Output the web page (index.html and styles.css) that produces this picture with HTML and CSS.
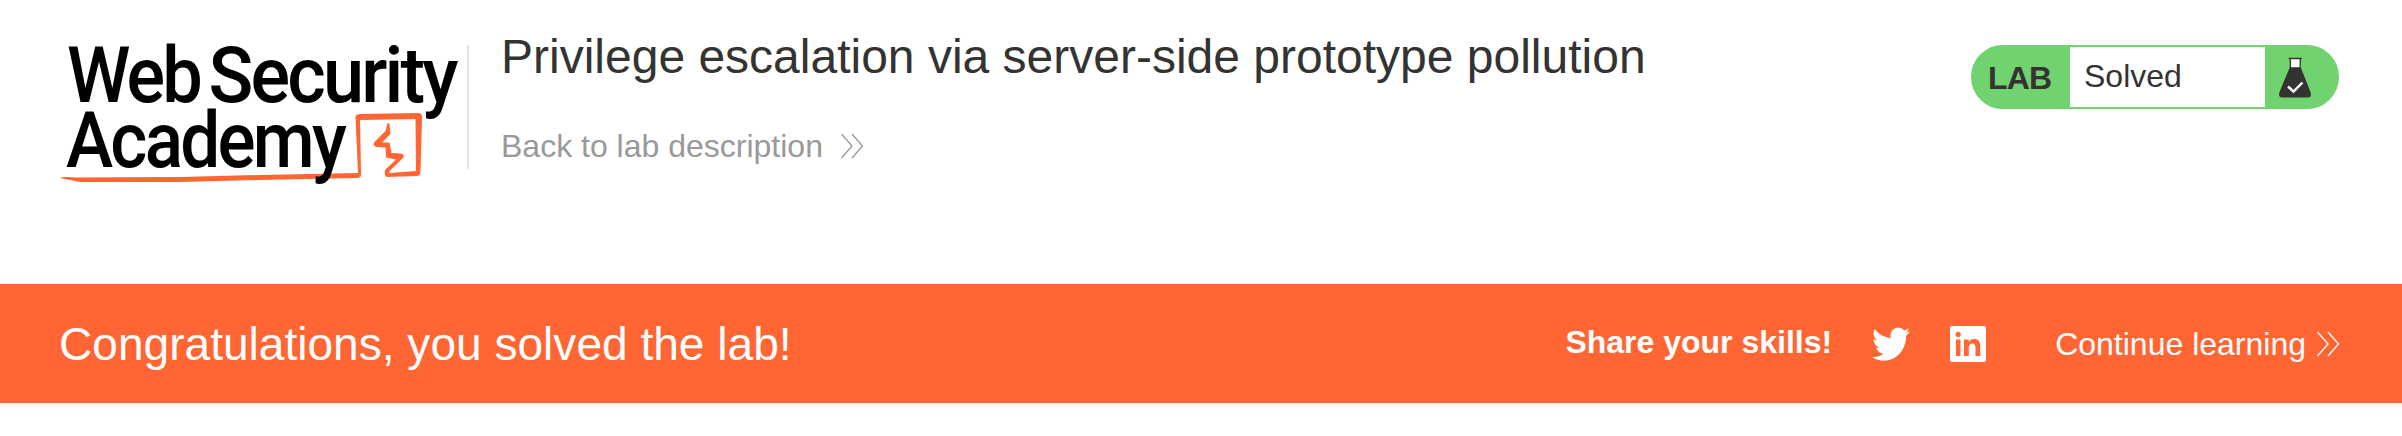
FILE: index.html
```html
<!DOCTYPE html>
<html lang="en">
<head>
<meta charset="utf-8">
<title>Privilege escalation via server-side prototype pollution</title>
<link rel="stylesheet" href="styles.css">
</head>
<body>
<header class="lab-header">
  <a class="logo">
    <svg width="407" height="175" viewBox="60 20 407 175" role="img" aria-label="Web Security Academy">
      <path fill="#ff6633" d="M60 178 Q63 176.500 76 177.500 L180 177 L260 175 L358 173 L355.500 117 Q356 114 360 114 L419 113 Q422.500 114 422 118 L420.500 172 Q420.500 176 417 176 L387 177 Q384 176 385 170 L396 159.500 L386 157.500 L385.500 147.500 L376 147 Q372.500 145.500 374 142.500 L385.500 131 L387.500 123 L389.500 124 L390.500 134 L382 142.500 L389.500 142.500 L391.500 153 L401 153.500 Q405.500 155 403 158 L389.500 171 L389.500 173 L416 171 L415.500 119 L360 120 L361 174 Q361 178 357 178 L260 180 L180 182 L80 182 Z"/>
      <g class="logo-word">
        <text x="67" y="102.300" textLength="133" lengthAdjust="spacingAndGlyphs">Web</text>
        <text x="208.500" y="102.300" textLength="247" lengthAdjust="spacingAndGlyphs">Security</text>
        <text x="66" y="167.200" textLength="278" lengthAdjust="spacingAndGlyphs">Academy</text>
      </g>
    </svg>
  </a>
  <div class="title">
    <h2>Privilege escalation via server-side prototype pollution</h2>
    <a class="back">Back to lab description
      <svg class="chevrons" width="24" height="26" viewBox="0 0 24 26"><path d="M1.500 1 12 13 1.500 25M12 1 22.500 13 12 25"/></svg>
    </a>
  </div>
  <div class="status">
    <span class="status-label">LAB</span>
    <p>Solved</p>
    <span class="status-icon">
      <svg width="34" height="42" viewBox="0 0 34 42">
        <path fill="#333332" d="M11.500 11 1.500 35Q0 40.500 4 40.500H30Q34 40.500 32.500 35L23 11Z"/>
        <path fill="#fff" stroke="#333332" stroke-width="1.300" d="M11.500 1.500h11.500l-.8 1.500v8H12.300V3z"/>
        <path fill="none" stroke="#fff" stroke-width="2.400" d="M10 29.500 15.500 34.500 24.500 25.500"/>
      </svg>
    </span>
  </div>
</header>
<section class="banner">
  <h4>Congratulations, you solved the lab!</h4>
  <span class="share">Share your skills!</span>
  <a class="twitter"><svg width="38" height="34" viewBox="0 1.900 24 20" preserveAspectRatio="none"><path d="M24 4.600a10 10 0 0 1-2.800.8 5 5 0 0 0 2.200-2.700c-1 .5-2 1-3.100 1.200a4.900 4.900 0 0 0-8.400 4.500C7.700 8.100 4.100 6.100 1.700 3.100a4.900 4.900 0 0 0 1.500 6.600c-.8 0-1.600-.2-2.200-.6v.1c0 2.300 1.700 4.300 3.900 4.800-.7.200-1.500.2-2.200.1a4.900 4.900 0 0 0 4.600 3.400A9.900 9.900 0 0 1 0 19.500a14 14 0 0 0 7.500 2.200c9.100 0 14-7.500 14-14v-.6c1-.7 1.800-1.600 2.500-2.500z"/></svg></a>
  <a class="linkedin"><svg width="36" height="36" viewBox="0 0 36 36"><path fill-rule="evenodd" d="M2 0H34Q36 0 36 2V34Q36 36 34 36H2Q0 36 0 34V2Q0 0 2 0ZM6 13.500V30H10.500V13.500ZM8.200 5.800a2.600 2.600 0 1 0 0 5.200 2.600 2.600 0 0 0 0-5.200ZM14 13.500V30H18.800V21.500Q19 17.500 22.200 17.500T25.500 21.500V30H30.300V20.500C30.300 15.500 28.500 13 24.200 13Q20.500 13 18.800 16V13.500Z"/></svg></a>
  <a class="continue">Continue learning
    <svg class="chevrons" width="24" height="26" viewBox="0 0 24 26"><path d="M1.500 1 12 13 1.500 25M12 1 22.500 13 12 25"/></svg>
  </a>
</section>
</body>
</html>
```
FILE: styles.css
```css
body {
  margin: 0;
  background: #fff;
  font-family: "Liberation Sans", Arial, sans-serif;
  font-size: 32px;
  line-height: 36px;
  color: #333332;
}
h2, h4, p { margin: 0; font-weight: 400; }
svg { display: block; flex: none; }
.lab-header {
  display: flex;
  align-items: flex-start;
  box-sizing: border-box;
  height: 284px;
  padding: 45px 63px 0 60px;
}
.logo {
  height: 124px;
  border-right: 2px solid #e5e5e5;
}
.logo svg { margin-top: -25px; }
.logo-word {
  font: 500 77.500px Roboto, sans-serif;
  letter-spacing: -3px;
  fill: #000;
}
.title {
  flex: 1;
  margin: -15px 0 0 32px;
}
.title h2 {
  font-size: 48px;
  line-height: 54px;
  white-space: nowrap;
}
.back {
  display: flex;
  align-items: center;
  gap: 17px;
  margin-top: 44px;
  color: #999;
}
.chevrons {
  fill: none;
  stroke: currentColor;
  stroke-width: 1.300;
}
.status {
  display: flex;
  box-sizing: border-box;
  width: 368px;
  height: 64px;
  border: 2px solid #71d36f;
  border-radius: 32px;
  background: #71d36f;
}
.status-label {
  width: 97px;
  padding: 13px 0 0 15px;
  box-sizing: border-box;
  font-weight: 700;
  letter-spacing: -0.8px;
}
.status p {
  width: 195px;
  padding: 11px 0 0 14px;
  box-sizing: border-box;
  background: #fff;
}
.status-icon { padding: 10px 0 0 13px; }
.banner {
  display: flex;
  align-items: center;
  height: 119px;
  padding: 0 62px 0 59px;
  background: #ff6633;
  color: #fff;
}
.banner h4 {
  flex: 1;
  padding-top: 1px;
  font-size: 46.080px;
  line-height: 54px;
}
.share { margin-top: -4px; font-weight: 700; }
.banner a svg { fill: currentColor; }
.twitter { margin-left: 40px; }
.linkedin { margin-left: 40px; }
.continue {
  display: flex;
  align-items: center;
  gap: 10px;
  margin-left: 69px;
}
.banner .continue svg { fill: none; }
```
